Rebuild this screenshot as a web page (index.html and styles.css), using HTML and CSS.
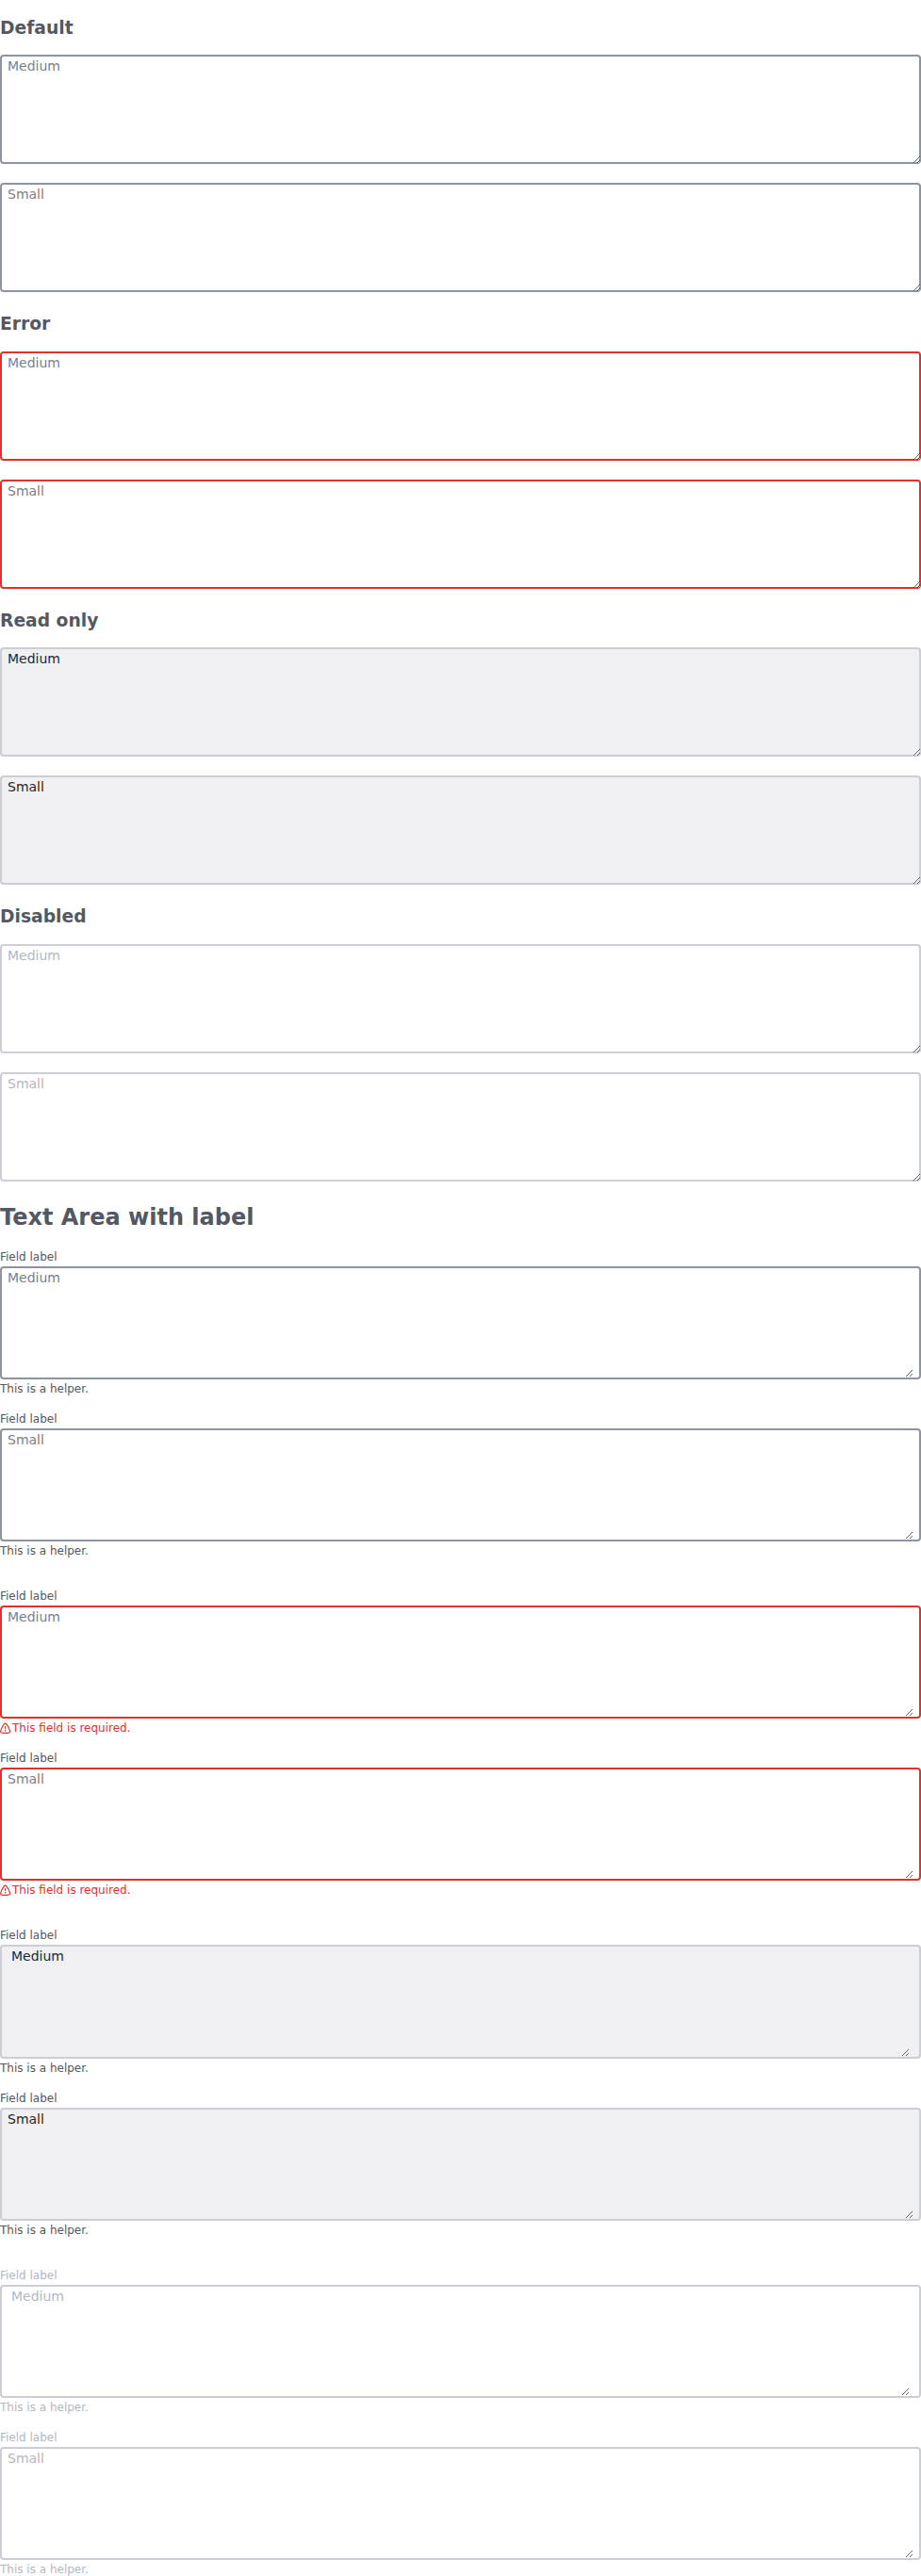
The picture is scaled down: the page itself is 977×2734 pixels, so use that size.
FILE: index.html
```html
<!DOCTYPE html>
<html lang="en">
<head>
<meta charset="utf-8">
<title>Text Area</title>
<link rel="stylesheet" href="styles.css">
</head>
<body>
<main>
<section class="group">
<h3>Default</h3>
<textarea class="area" placeholder="Medium"></textarea>
<textarea class="area" placeholder="Small"></textarea>
</section>
<section class="group">
<h3>Error</h3>
<textarea class="area error" placeholder="Medium"></textarea>
<textarea class="area error" placeholder="Small"></textarea>
</section>
<section class="group">
<h3>Read only</h3>
<textarea class="area readonly" readonly>Medium</textarea>
<textarea class="area readonly" readonly>Small</textarea>
</section>
<section class="group">
<h3>Disabled</h3>
<textarea class="area disabled" placeholder="Medium" disabled></textarea>
<textarea class="area disabled" placeholder="Small" disabled></textarea>
</section>
<h2>Text Area with label</h2>
<section class="fields">
<div class="field"><label>Field label</label><div class="box"><textarea placeholder="Medium"></textarea></div><p>This is a helper.</p></div>
<div class="field"><label>Field label</label><div class="box"><textarea placeholder="Small"></textarea></div><p>This is a helper.</p></div>
</section>
<section class="fields">
<div class="field error"><label>Field label</label><div class="box"><textarea placeholder="Medium"></textarea></div><p><svg class="icon" viewBox="0 0 12 12"><path d="M4.1 2.1Q5.6.2 7.1 2.1Q9.5 5.3 10.5 9.1Q10.8 10.9 9.2 11.1Q5.6 11.5 2 11.1Q.4 10.9.7 9.1Q1.7 5.3 4.1 2.1Z"/><path d="M5.6 4v3.2M5.6 8.1v1.3"/></svg>This field is required.</p></div>
<div class="field error"><label>Field label</label><div class="box"><textarea placeholder="Small"></textarea></div><p><svg class="icon" viewBox="0 0 12 12"><path d="M4.1 2.1Q5.6.2 7.1 2.1Q9.5 5.3 10.5 9.1Q10.8 10.9 9.2 11.1Q5.6 11.5 2 11.1Q.4 10.9.7 9.1Q1.7 5.3 4.1 2.1Z"/><path d="M5.6 4v3.2M5.6 8.1v1.3"/></svg>This field is required.</p></div>
</section>
<section class="fields">
<div class="field readonly"><label>Field label</label><div class="box wide"><textarea readonly>Medium</textarea></div><p>This is a helper.</p></div>
<div class="field readonly"><label>Field label</label><div class="box"><textarea readonly>Small</textarea></div><p>This is a helper.</p></div>
</section>
<section class="fields">
<div class="field disabled"><label>Field label</label><div class="box wide"><textarea placeholder="Medium" disabled></textarea></div><p>This is a helper.</p></div>
<div class="field disabled"><label>Field label</label><div class="box"><textarea placeholder="Small" disabled></textarea></div><p>This is a helper.</p></div>
</section>
</main>
</body>
</html>
```

FILE: styles.css
```css
* { box-sizing: border-box; }
body {
  margin: 0;
  background: #fff;
  color: #535862;
  font-family: "DejaVu Sans", sans-serif;
}
h2, h3, p { margin: 0; }
textarea {
  display: block;
  width: 100%;
  margin: 0;
  border: 0;
  outline: 0;
  background: transparent;
  color: #25272c;
  font: 14px/20px "DejaVu Sans", sans-serif;
  resize: both;
}
textarea::placeholder { color: #7b808c; opacity: 1; }
main {
  height: 2734px;
  padding-top: 15.75px;
  overflow: hidden;
}
.group {
  display: grid;
  row-gap: 20px;
  height: 314.4375px;
  align-content: start;
}
h3 {
  height: 22.625px;
  font-size: 18.72px;
  line-height: 28px;
}
.area {
  height: 116px;
  padding: 2px 8px;
  border-radius: 4px;
  box-shadow: inset 0 0 0 2px #8e93a0;
}
.area.error { box-shadow: inset 0 0 0 2px #e0322d; }
.area.readonly { background: #f0f0f2; box-shadow: inset 0 0 0 2px #cdcdd6; }
.area.disabled { box-shadow: inset 0 0 0 2px #cdcdd6; }
.disabled::placeholder, .disabled textarea::placeholder { color: #b4b7bf; }
h2 {
  height: 52.28125px;
  padding-top: 0.75px;
  font-size: 24px;
  line-height: 36px;
}
.fields { height: 360.3125px; }
.field { height: 172.1875px; }
label {
  display: block;
  height: 18px;
  font-size: 12px;
  line-height: 16px;
}
.box {
  height: 120.1875px;
  padding: 2px 8px;
  border-radius: 4px;
  box-shadow: inset 0 0 0 2px #8e93a0;
}
.box.wide { padding: 2px 12px; }
.box textarea { height: 116.1875px; padding: 0; }
.error .box { box-shadow: inset 0 0 0 2px #e0322d; }
.readonly .box { background: #f0f0f2; box-shadow: inset 0 0 0 2px #cdcdd6; }
.disabled .box { box-shadow: inset 0 0 0 2px #cdcdd6; }
.field p {
  display: flex;
  align-items: center;
  gap: 1px;
  padding-top: 2px;
  font-size: 12px;
  line-height: 16px;
}
.error p { color: #e0322d; }
.disabled label, .disabled p { color: #b4b7bf; }
.icon {
  width: 12px;
  height: 12px;
  fill: none;
  stroke: currentColor;
  stroke-width: 1.2;
}
```
